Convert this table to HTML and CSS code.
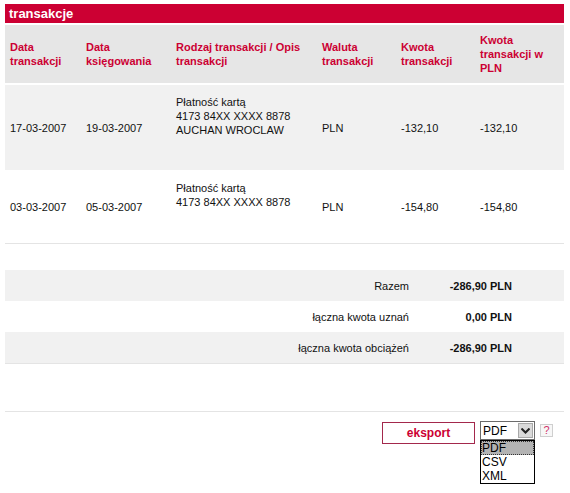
FILE: index.html
```html
<!DOCTYPE html>
<html lang="pl">
<head>
<meta charset="utf-8">
<title>transakcje</title>
<link rel="stylesheet" href="styles.css">
</head>
<body>
<div class="page">
  <div class="title">transakcje</div>
  <table class="tx">
    <colgroup>
      <col class="c1"><col class="c2"><col class="c3"><col class="c4"><col class="c5"><col class="c6">
    </colgroup>
    <thead>
      <tr>
        <th>Data<br>transakcji</th>
        <th>Data<br>księgowania</th>
        <th>Rodzaj transakcji / Opis<br>transakcji</th>
        <th>Waluta<br>transakcji</th>
        <th>Kwota<br>transakcji</th>
        <th>Kwota<br>transakcji w<br>PLN</th>
      </tr>
    </thead>
    <tbody>
      <tr class="r1">
        <td>17-03-2007</td>
        <td>19-03-2007</td>
        <td class="desc">Płatność kartą<br>4173 84XX XXXX 8878<br>AUCHAN WROCLAW</td>
        <td>PLN</td>
        <td>-132,10</td>
        <td>-132,10</td>
      </tr>
      <tr class="r2">
        <td>03-03-2007</td>
        <td>05-03-2007</td>
        <td class="desc">Płatność kartą<br>4173 84XX XXXX 8878</td>
        <td>PLN</td>
        <td>-154,80</td>
        <td>-154,80</td>
      </tr>
    </tbody>
  </table>

  <div class="summary">
    <div class="srow alt"><span class="lbl">Razem</span><span class="val">-286,90 PLN</span></div>
    <div class="srow"><span class="lbl">łączna kwota uznań</span><span class="val">0,00 PLN</span></div>
    <div class="srow alt last"><span class="lbl">łączna kwota obciążeń</span><span class="val">-286,90 PLN</span></div>
  </div>

  <div class="sep"></div>

  <div class="actions">
    <button class="export" type="button">eksport</button>
    <div class="select">
      <div class="sel-box">
        <span class="sel-value">PDF</span>
        <span class="sel-arrow">
          <svg width="9" height="6" viewBox="0 0 9 6"><path d="M0.5 0.5 L4.5 4.5 L8.5 0.5" fill="none" stroke="#222" stroke-width="2"/></svg>
        </span>
      </div>
      <div class="sel-list">
        <div class="opt active">PDF</div>
        <div class="opt">CSV</div>
        <div class="opt">XML</div>
      </div>
    </div>
    <span class="help">?</span>
  </div>
</div>
</body>
</html>
```

FILE: styles.css
```css
html, body {
  margin: 0;
  padding: 0;
  background: #fff;
}

body {
  font-family: "Liberation Sans", Arial, sans-serif;
  font-size: 11px;
  color: #111;
  min-height: 493px;
}

.page {
  width: 559px;
  padding: 4px 0 0 5px;
}

.title {
  height: 19px;
  line-height: 19px;
  background: #cc0033;
  color: #fff;
  font-weight: bold;
  font-size: 13px;
  padding-left: 4px;
  margin-bottom: 2px;
}

.tx {
  width: 559px;
  table-layout: fixed;
  border-collapse: separate;
  border-spacing: 0;
}

.c1 { width: 76px; }
.c2 { width: 90px; }
.c3 { width: 146px; }
.c4 { width: 79px; }
.c5 { width: 79px; }
.c6 { width: 89px; }

.tx th {
  background: #e6e6e6;
  color: #cc0033;
  font-weight: bold;
  font-size: 11px;
  line-height: 14px;
  text-align: left;
  vertical-align: middle;
  padding: 0 5px;
  border-bottom: 2px solid #fff;
}

.tx thead tr {
  height: 60px;
}

.tx td {
  padding: 0 5px;
  line-height: 14px;
  vertical-align: middle;
}

.tx .r1 {
  height: 85px;
}

.tx .r1 td {
  background: #f1f1f1;
}

.tx .r2 {
  height: 74px;
}

.tx .r2 td {
  border-bottom: 1px solid #e4e4e4;
}

.tx td.desc {
  padding-bottom: 24px;
}

.summary {
  margin-top: 26px;
}

.srow {
  display: grid;
  grid-template-columns: 1fr 103px;
  align-items: center;
  height: 31px;
  padding-right: 52px;
}

.srow.alt {
  background: #f1f1f1;
}

.srow.last {
  border-bottom: 1px solid #e4e4e4;
}

.lbl {
  text-align: right;
}

.val {
  text-align: right;
  font-weight: bold;
}

.sep {
  margin-top: 47px;
  height: 1px;
  background: #e4e4e4;
}

.actions {
  display: flex;
  justify-content: flex-end;
  align-items: flex-start;
  padding-right: 11px;
  margin-top: 9px;
}

.export {
  width: 93px;
  height: 22px;
  margin-top: 1px;
  margin-right: 5px;
  background: #fff;
  border: 1px solid #a3284c;
  color: #cc0033;
  font-family: "Liberation Sans", Arial, sans-serif;
  font-weight: bold;
  font-size: 12px;
  padding: 0;
}

.select {
  position: relative;
  width: 55px;
}

.sel-box {
  height: 19px;
  box-sizing: border-box;
  border: 1px solid #6b6b6b;
  background: #fff;
  display: flex;
  align-items: center;
  justify-content: space-between;
}

.sel-value {
  font-size: 12px;
  color: #000;
  padding-left: 2px;
}

.sel-arrow {
  width: 15px;
  height: 15px;
  margin-right: 1px;
  background: #d9d9d9;
  border: 1px solid #a8a8a8;
  box-sizing: border-box;
  display: flex;
  align-items: center;
  justify-content: center;
}

.sel-list {
  position: absolute;
  top: 19px;
  left: 0;
  width: 55px;
  box-sizing: border-box;
  background: #fff;
  border: 1px solid #000;
  z-index: 2;
}

.opt {
  font-size: 12px;
  line-height: 14px;
  height: 14px;
  padding-left: 1px;
  color: #000;
}

.opt.active {
  background: #b3b3b3;
  outline: 1px dotted #333;
  outline-offset: -1px;
}

.help {
  width: 13px;
  height: 13px;
  margin-top: 3px;
  margin-left: 5px;
  box-sizing: border-box;
  border: 1px solid #cfcfcf;
  background: #f7f7f7;
  color: #d0336a;
  font-size: 11px;
  line-height: 11px;
  text-align: center;
}
```
